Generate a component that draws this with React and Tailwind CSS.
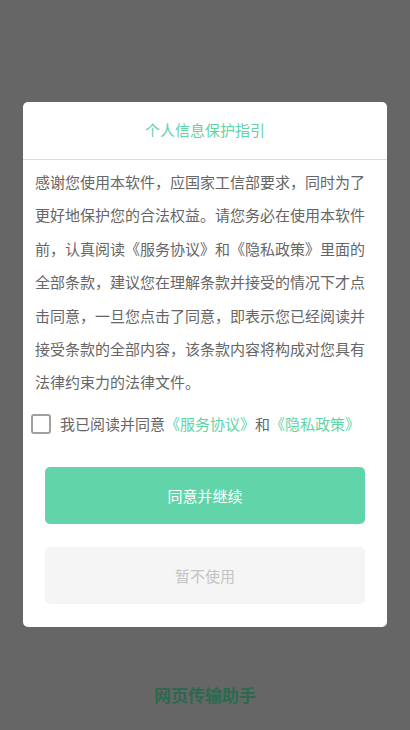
import React from 'react';

const font = { fontFamily: '"Noto Sans CJK SC", "Noto Sans", sans-serif' };

const App = () => {
  return (
    <div className="w-[410px] h-[730px] bg-[#666666] flex flex-col items-center" style={font}>
      <div className="mt-[102px] w-[364px] bg-white rounded-[5px] overflow-hidden">
        <div className="h-[58px] flex items-center justify-center border-b border-[#dcdcdc]">
          <span className="text-[15px] text-[#5fd4a7]">个人信息保护指引</span>
        </div>
        <div className="px-[12px] pt-[5px]">
          <p className="text-[15px] leading-[33.4px] text-[#666666]">
            感谢您使用本软件，应国家工信部要求，同时为了更好地保护您的合法权益。请您务必在使用本软件前，认真阅读《服务协议》和《隐私政策》里面的全部条款，建议您在理解条款并接受的情况下才点击同意，一旦您点击了同意，即表示您已经阅读并接受条款的全部内容，该条款内容将构成对您具有法律约束力的法律文件。
          </p>
        </div>
        <div className="flex items-center mt-[14px] pl-[8px]">
          <span className="w-[20px] h-[20px] border-2 border-[#a0a0a0] rounded-[3px]"></span>
          <span className="ml-[9px] text-[15px] text-[#666666] whitespace-nowrap">
            我已阅读并同意<span className="text-[#5fd4a7]">《服务协议》</span>和<span className="text-[#5fd4a7]">《隐私政策》</span>
          </span>
        </div>
        <div className="px-[22px] pt-[32px] pb-[23px] flex flex-col gap-[23px]">
          <button className="h-[57px] w-full rounded-[5px] bg-[#61d5a9] text-white text-[15px]">
            同意并继续
          </button>
          <button className="h-[57px] w-full rounded-[5px] bg-[#f5f5f5] text-[#c4c4c4] text-[15px]">
            暂不使用
          </button>
        </div>
      </div>
      <div className="mt-[55px] text-[17px] font-bold text-[#2b6a50]">网页传输助手</div>
    </div>
  );
};

export default App;
